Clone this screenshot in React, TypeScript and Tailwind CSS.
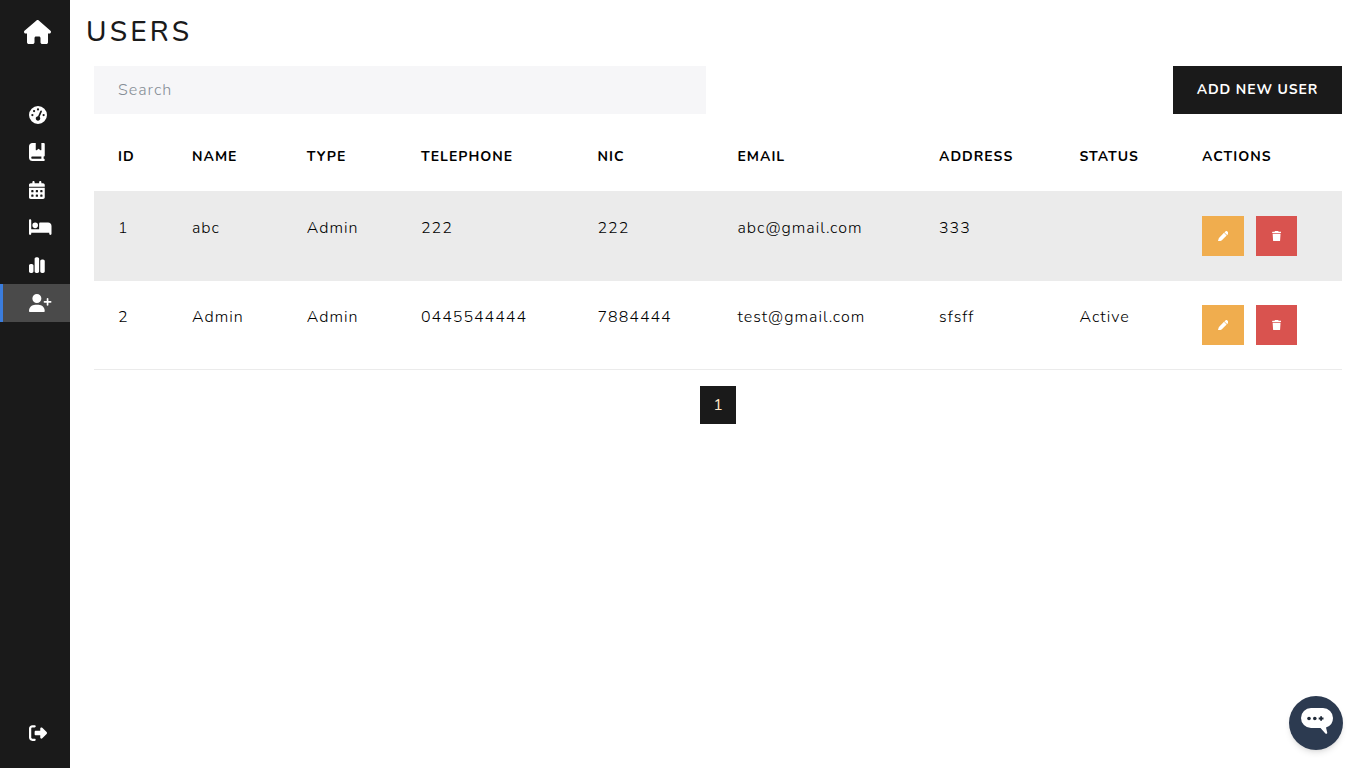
import React from "react";
import { FaHouse, FaGaugeHigh, FaBookBookmark, FaCalendarDays, FaBed, FaChartSimple, FaUserPlus, FaRightFromBracket, FaPen, FaTrash } from "react-icons/fa6";

const navItems = [
  { icon: <FaGaugeHigh className="h-[18px] w-[18px]" />, active: false },
  { icon: <FaBookBookmark className="h-[18px] w-[15.75px]" />, active: false },
  { icon: <FaCalendarDays className="h-[18px] w-[15.75px]" />, active: false },
  { icon: <FaBed className="h-[18px] w-[22.5px]" />, active: false },
  { icon: <FaChartSimple className="h-[18px] w-[15.75px]" />, active: false },
  { icon: <FaUserPlus className="h-[18px] w-[22.5px]" />, active: true },
];

const columns = [
  { label: "ID", width: "w-[74px]" },
  { label: "NAME", width: "w-[114.8px]" },
  { label: "TYPE", width: "w-[114.2px]" },
  { label: "TELEPHONE", width: "w-[176.5px]" },
  { label: "NIC", width: "w-[140px]" },
  { label: "EMAIL", width: "w-[201.5px]" },
  { label: "ADDRESS", width: "w-[140.5px]" },
  { label: "STATUS", width: "w-[122.5px]" },
  { label: "ACTIONS", width: "w-[164px]" },
];

const users = [
  { id: "1", name: "abc", type: "Admin", tel: "222", nic: "222", email: "abc@gmail.com", address: "333", status: "" },
  { id: "2", name: "Admin", type: "Admin", tel: "0445544444", nic: "7884444", email: "test@gmail.com", address: "sfsff", status: "Active" },
];

const App: React.FC = () => {
  return (
    <div className="flex h-[768px] w-[1366px] overflow-hidden bg-white font-['Nunito','Lato','Liberation_Sans',sans-serif] text-[#1a1a1a]">
      {/* Sidebar */}
      <aside className="flex w-[70px] shrink-0 flex-col bg-[#1a1a1a] text-white">
        <div className="flex h-[64px] items-center pl-[24px]">
          <FaHouse className="h-[24px] w-[27px]" />
        </div>
        <nav className="mt-[32px] flex flex-col">
          {navItems.map((item, i) => (
            <div
              key={i}
              className={`flex items-center ${item.active ? "h-[38px] border-l-[3px] border-[#3b7ddd] bg-[#4a4a4a] pl-[26px]" : "h-[37.5px] pl-[29px]"}`}
            >
              {item.icon}
            </div>
          ))}
        </nav>
        <div className="mt-auto flex h-[70px] items-center pl-[29px]">
          <FaRightFromBracket className="h-[18px] w-[18px]" />
        </div>
      </aside>

      {/* Main */}
      <main className="min-w-0 flex-1">
        <h1 className="ml-[16px] mt-[12px] h-[40px] text-[28px] font-medium leading-[40px] tracking-[3.2px] text-[#1a1a1a]">USERS</h1>
        <div className="ml-[24px] mr-[24px] mt-[14px]">
          <div className="flex items-start justify-between">
            <input
              placeholder="Search"
              className="h-[48px] w-[612px] bg-[#f6f6f8] px-[24px] text-base font-light tracking-[1px] outline-none placeholder:text-[#868e96]"
            />
            <button className="h-[48px] w-[169px] bg-[#1a1a1a] pb-[2px] text-[14px] font-bold tracking-[0.9px] text-white">ADD NEW USER</button>
          </div>
          <table className="w-[1248px] table-fixed border-collapse">
            <thead>
              <tr className="h-[77px]">
                {columns.map((c) => (
                  <th key={c.label} className={`${c.width} px-[24px] pt-[7px] text-left text-[14px] font-bold tracking-[1px] text-black`}>
                    {c.label}
                  </th>
                ))}
              </tr>
            </thead>
            <tbody className="text-base font-light tracking-[1px] text-black">
              {users.map((u, i) => (
                <tr key={u.id} className={i === 0 ? "h-[90px] bg-[#ebebeb]" : "h-[88px] border-b border-[#ebebeb]"}>
                  {[u.id, u.name, u.type, u.tel, u.nic, u.email, u.address, u.status].map((v, j) => (
                    <td key={j} className={`truncate px-[24px] align-middle ${i === 0 ? "pb-[16px]" : "pb-[15px]"}`}>{v}</td>
                  ))}
                  <td className="px-[24px] align-middle">
                    <div className="flex gap-[12px]">
                      <button className="flex h-[40px] w-[42px] items-center justify-center bg-[#f0ad4e] text-white">
                        <FaPen className="h-[10.5px] w-[10.5px]" />
                      </button>
                      <button className="flex h-[40px] w-[41px] items-center justify-center bg-[#d9534f] text-white">
                        <FaTrash className="h-[10.5px] w-[9.2px]" />
                      </button>
                    </div>
                  </td>
                </tr>
              ))}
            </tbody>
          </table>
          <div className="mt-[16px] flex justify-center">
            <span className="flex h-[38px] w-[36px] items-center justify-center bg-[#1a1a1a] text-base text-[#ffe8c8]">1</span>
          </div>
        </div>
      </main>

      {/* Chat bubble */}
      <button className="absolute left-[1289px] top-[696px] flex h-[54px] w-[54px] items-center justify-center rounded-full bg-[#2c3a50] pl-[1px] shadow-md">
        <svg width="32" height="32" viewBox="0 0 32 32">
          <path d="M10 1h12a10 10 0 0 1 10 10a10 10 0 0 1-7 9.5l1.2 5c.3 1.3-1 1.8-1.8.9L19.500 21H10A10 10 0 0 1 0 11A10 10 0 0 1 10 1z" fill="#fff" />
          <circle cx="8" cy="11.500" r="1.800" fill="#1f2937" />
          <circle cx="13.800" cy="11.500" r="1.800" fill="#1f2937" />
          <path d="M19.200 9.200h1.800v1.400h1.500v1.800h-1.500v1.400h-1.800v-1.400h-1.500v-1.800h1.500z" fill="#1f2937" />
        </svg>
      </button>
    </div>
  );
};

export default App;
